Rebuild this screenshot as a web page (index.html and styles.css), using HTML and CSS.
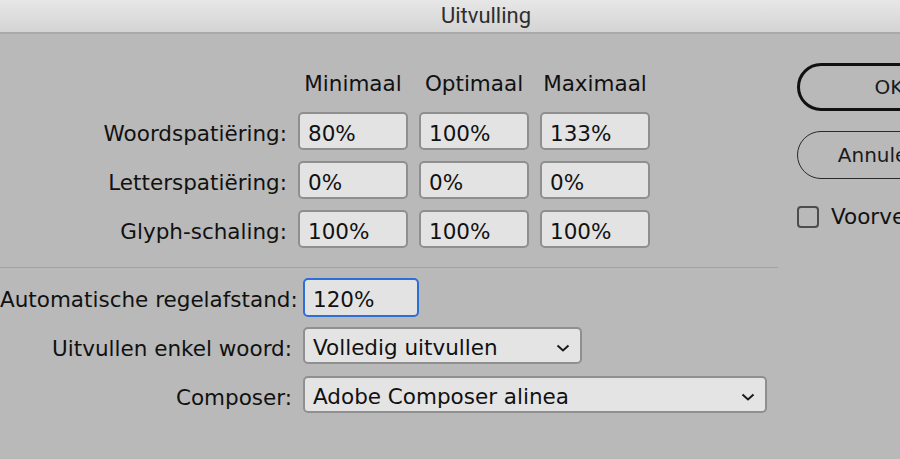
FILE: index.html
```html
<!DOCTYPE html>
<html lang="nl">

<head>
    <meta charset="UTF-8">
    <meta name="viewport" content="width=device-width, initial-scale=1.0">
    <title>Uitvulling</title>
    <link rel="stylesheet" href="styles.css">
</head>

<body>
    <div class="titlebar">Uitvulling</div>

    <div class="dialog">
        <div class="settings">
            <div class="spacing-grid">
                <div></div>
                <div class="col-head">Minimaal</div>
                <div class="col-head">Optimaal</div>
                <div class="col-head">Maximaal</div>

                <div class="label">Woordspatiëring:</div>
                <div class="field">80%</div>
                <div class="field">100%</div>
                <div class="field">133%</div>

                <div class="label">Letterspatiëring:</div>
                <div class="field">0%</div>
                <div class="field">0%</div>
                <div class="field">0%</div>

                <div class="label">Glyph-schaling:</div>
                <div class="field">100%</div>
                <div class="field">100%</div>
                <div class="field">100%</div>
            </div>

            <hr class="divider">

            <div class="options-grid">
                <div class="label">Automatische regelafstand:</div>
                <div><div class="field field-focus">120%</div></div>

                <div class="label">Uitvullen enkel woord:</div>
                <div>
                    <div class="select select-short">
                        <span>Volledig uitvullen</span>
                        <svg class="chevron" width="14" height="8" viewBox="0 0 14 8"><path d="M1.5 1.5 L7 6.5 L12.5 1.5" fill="none" stroke="#1a1a1a" stroke-width="2"/></svg>
                    </div>
                </div>

                <div class="label">Composer:</div>
                <div>
                    <div class="select select-long">
                        <span>Adobe Composer alinea</span>
                        <svg class="chevron" width="14" height="8" viewBox="0 0 14 8"><path d="M1.5 1.5 L7 6.5 L12.5 1.5" fill="none" stroke="#1a1a1a" stroke-width="2"/></svg>
                    </div>
                </div>
            </div>
        </div>

        <div class="actions">
            <button class="btn btn-default">OK</button>
            <button class="btn">Annuleren</button>
            <label class="check">
                <span class="check-box"></span>
                <span>Voorvertoning</span>
            </label>
        </div>
    </div>
</body>
</html>
```

FILE: styles.css
```css
body {
    margin: 0;
    padding: 0;
    width: 900px;
    height: 459px;
    overflow: hidden;
    background-color: #b9b9b9;
    font-family: 'DejaVu Sans', sans-serif;
    font-size: 21.5px;
    color: #111;
}

.titlebar {
    height: 32px;
    line-height: 32px;
    padding-left: 72px;
    text-align: center;
    font-family: 'Roboto', sans-serif;
    font-size: 22px;
    color: #2e2e2e;
    background: linear-gradient(#e7e7e7, #d4d4d4);
    border-bottom: 2px solid #a9a9a9;
}

.dialog {
    display: flex;
}

.settings {
    flex: 0 0 778px;
    padding-top: 37px;
}

.actions {
    flex: 0 0 184px;
    margin-left: 19px;
    padding-top: 29px;
    display: flex;
    flex-direction: column;
}

/* top block: spacing values */
.spacing-grid {
    display: grid;
    grid-template-columns: 287px 110px 110px 110px;
    grid-template-rows: 30px 38px 38px 38px;
    column-gap: 11px;
    row-gap: 11px;
}

.col-head {
    text-align: center;
    line-height: 26px;
}

.label {
    text-align: right;
    white-space: nowrap;
    line-height: 28px;
    padding-top: 8px;
}

.field {
    box-sizing: border-box;
    height: 38px;
    padding: 6px 8px 0;
    line-height: 28px;
    background-color: #e3e3e3;
    border: 2px solid #8f8f8f;
    border-radius: 5px;
}

.divider {
    margin: 19px 0 0;
    border: none;
    border-top: 1px solid #a2a2a2;
}

/* bottom block: other options */
.options-grid {
    display: grid;
    grid-template-columns: 292px 1fr;
    grid-auto-rows: 38px;
    column-gap: 11px;
    row-gap: 11px;
    margin-top: 10px;
}

.field-focus {
    width: 116px;
    height: 39px;
    border-color: #2c6fd6;
}

.select {
    box-sizing: border-box;
    height: 37px;
    padding: 5px 10px 0 8px;
    line-height: 28px;
    display: flex;
    justify-content: space-between;
    background-color: #e4e4e4;
    border: 2px solid #8f8f8f;
    border-radius: 5px;
}

.select-short {
    width: 279px;
}

.select-long {
    width: 464px;
}

.chevron {
    margin-top: 10px;
}

/* right column */
.btn {
    box-sizing: border-box;
    width: 184px;
    height: 48px;
    padding: 0;
    font-family: 'DejaVu Sans', sans-serif;
    font-size: 20px;
    color: #1a1a1a;
    text-align: center;
    background: transparent;
    border: 1.5px solid #2a2a2a;
    border-radius: 24px;
}

.btn-default {
    border: 3px solid #111;
    margin-bottom: 20px;
}

.check {
    display: flex;
    align-items: center;
    gap: 12px;
    margin-top: 25px;
    white-space: nowrap;
}

.check-box {
    box-sizing: border-box;
    flex: 0 0 22px;
    height: 22px;
    border: 2px solid #4d4d4d;
    border-radius: 4px;
}
```
